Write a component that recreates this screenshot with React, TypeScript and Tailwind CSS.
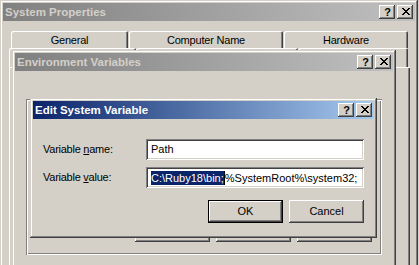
import React from "react";

const winFrame =
  "shadow-[inset_-1px_-1px_#404040,inset_1px_1px_#d4d0c8,inset_-2px_-2px_#808080,inset_2px_2px_#ffffff]";
const btnRaised =
  "shadow-[inset_-1px_-1px_#404040,inset_1px_1px_#ffffff,inset_-2px_-2px_#808080,inset_2px_2px_#d4d0c8]";
const sunken =
  "shadow-[inset_1px_1px_#808080,inset_-1px_-1px_#ffffff,inset_2px_2px_#404040,inset_-2px_-2px_#d4d0c8]";
const etched =
  "shadow-[inset_1px_1px_#808080,inset_-1px_-1px_#ffffff,inset_2px_2px_#ffffff,inset_-2px_-2px_#808080]";
const tabEdge =
  "shadow-[inset_1px_1px_#ffffff,inset_-1px_0_#404040,inset_-2px_0_#808080]";

function CloseGlyph() {
  const rows = [
    "XX....XX",
    ".XX..XX.",
    "..XXXX..",
    "...XX...",
    "..XXXX..",
    ".XX..XX.",
    "XX....XX",
  ];
  return (
    <svg width="8" height="7" viewBox="0 0 8 7" shapeRendering="crispEdges">
      {rows.map((r, y) =>
        r.split("").map((c, x) =>
          c === "X" ? <rect key={`${x}-${y}`} x={x} y={y} width="1" height="1" fill="#000" /> : null
        )
      )}
    </svg>
  );
}

function CapButtons() {
  return (
    <div className="flex gap-[2px]">
      <div className={`flex h-[14px] w-[16px] items-center justify-center bg-[#d4d0c8] ${btnRaised}`}>
        <span className="pl-[1px] text-[11px] font-bold leading-[14px] text-black">?</span>
      </div>
      <div className={`flex h-[14px] w-[16px] items-center justify-center bg-[#d4d0c8] ${btnRaised}`}>
        <div className="flex pb-[1px] pl-[1px]">
          <CloseGlyph />
        </div>
      </div>
    </div>
  );
}

function TitleBar({ title, active }: { title: string; active?: boolean }) {
  return (
    <div
      className={`flex h-[18px] items-center pl-[2px] pr-[2px] ${
        active
          ? "bg-[linear-gradient(to_right,#0a246a,#a6caf0)] text-white"
          : "bg-[linear-gradient(to_right,#808080,#c0c0c0)] text-[#d4d0c8]"
      }`}
    >
      <span className="flex-1 whitespace-nowrap text-[11.5px] font-bold leading-[18px]">{title}</span>
      <CapButtons />
    </div>
  );
}

function BackTab({ label, w }: { label: string; w: string }) {
  return (
    <div
      className={`flex h-[17px] items-center justify-center rounded-t-[2px] bg-[#d4d0c8] text-[11px] tracking-[-0.2px] text-black ${tabEdge} ${w}`}
    >
      <span className="pt-[1px]">{label}</span>
    </div>
  );
}

function FrontTab({ w }: { w: string }) {
  return <div className={`h-[19px] rounded-t-[2px] bg-[#d4d0c8] ${tabEdge} ${w}`} />;
}

function PushButton({ label, def }: { label: string; def?: boolean }) {
  return (
    <div className={`h-[23px] w-[75px] ${def ? "border border-black" : ""}`}>
      <div
        className={`flex h-full w-full items-center justify-center bg-[#d4d0c8] text-[11px] text-black ${btnRaised}`}
      >
        {label}
      </div>
    </div>
  );
}

export default function App() {
  return (
    <div className="relative h-[265px] w-[419px] overflow-hidden bg-[#d4d0c8] [font-family:'Liberation_Sans',Arial,sans-serif]">
      {/* System Properties */}
      <div className={`absolute left-0 top-0 h-[320px] w-[418px] bg-[#d4d0c8] p-[3px] ${winFrame}`}>
        <TitleBar title="System Properties" />
        <div className="ml-[8px] mt-[10px] flex gap-[1px]">
          <BackTab label="General" w="w-[117px]" />
          <BackTab label="Computer Name" w="w-[154px]" />
          <BackTab label="Hardware" w="w-[124px]" />
        </div>
        <div className="ml-[6px] flex">
          <FrontTab w="w-[127px]" />
          <FrontTab w="w-[162px]" />
          <FrontTab w="w-[110px]" />
        </div>
        <div className="ml-[6px] h-[260px] w-[401px] bg-[#d4d0c8] shadow-[inset_1px_1px_#ffffff,inset_-1px_-1px_#404040,inset_-2px_-2px_#808080]" />
      </div>

      {/* Environment Variables */}
      <div className={`absolute left-[12px] top-[50px] h-[260px] w-[384px] bg-[#d4d0c8] p-[3px] ${winFrame}`}>
        <TitleBar title="Environment Variables" />
        <div
          className={`ml-[11px] mt-[28px] flex h-[156px] w-[356px] flex-col justify-end pb-[13px] pr-[10px] ${etched}`}
        >
          <div className="flex justify-end gap-[6px]">
            <PushButton label="New..." />
            <PushButton label="Edit..." />
            <PushButton label="Delete" />
          </div>
        </div>
      </div>

      {/* Edit System Variable */}
      <div className={`absolute left-[30px] top-[98px] h-[140px] w-[347px] bg-[#d4d0c8] p-[3px] ${winFrame}`}>
        <TitleBar title="Edit System Variable" active />
        <div className="px-[10px] pt-[20px] text-[11px] text-black">
          <div className="flex h-[21px] items-center">
            <span className="w-[103px] whitespace-nowrap tracking-[-0.25px]">
              Variable <span className="underline">n</span>ame:
            </span>
            <div className={`flex h-[21px] w-[218px] items-center bg-white pl-[5px] ${sunken}`}>Path</div>
          </div>
          <div className="mt-[7px] flex h-[21px] items-center">
            <span className="w-[103px] whitespace-nowrap tracking-[-0.25px]">
              Variable <span className="underline">v</span>alue:
            </span>
            <div
              className={`flex h-[21px] w-[218px] items-center overflow-hidden whitespace-nowrap bg-white pl-[5px] ${sunken}`}
            >
              <span className="bg-[#0a246a] leading-[14px] text-white">C:\Ruby18\bin;</span>
              <span className="h-[14px] w-[1px] bg-black" />
              <span className="leading-[14px]">%SystemRoot%\system32;</span>
            </div>
          </div>
          <div className="mt-[12px] flex justify-end gap-[6px]">
            <PushButton label="OK" def />
            <PushButton label="Cancel" />
          </div>
        </div>
      </div>
    </div>
  );
}
